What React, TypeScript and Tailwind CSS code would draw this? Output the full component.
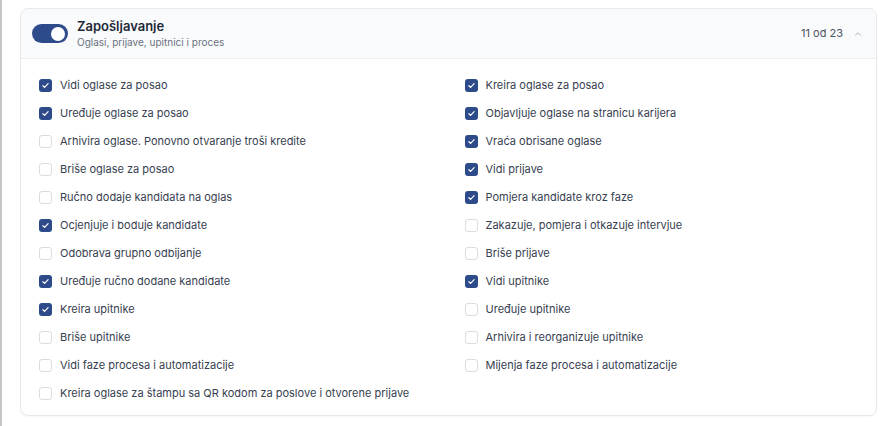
import React from "react";

const items: [string, boolean][] = [
  ["Vidi oglase za posao", true],
  ["Kreira oglase za posao", true],
  ["Uređuje oglase za posao", true],
  ["Objavljuje oglase na stranicu karijera", true],
  ["Arhivira oglase. Ponovno otvaranje troši kredite", false],
  ["Vraća obrisane oglase", true],
  ["Briše oglase za posao", false],
  ["Vidi prijave", true],
  ["Ručno dodaje kandidata na oglas", false],
  ["Pomjera kandidate kroz faze", true],
  ["Ocjenjuje i boduje kandidate", true],
  ["Zakazuje, pomjera i otkazuje intervjue", false],
  ["Odobrava grupno odbijanje", false],
  ["Briše prijave", false],
  ["Uređuje ručno dodane kandidate", true],
  ["Vidi upitnike", true],
  ["Kreira upitnike", true],
  ["Uređuje upitnike", false],
  ["Briše upitnike", false],
  ["Arhivira i reorganizuje upitnike", false],
  ["Vidi faze procesa i automatizacije", false],
  ["Mijenja faze procesa i automatizacije", false],
  ["Kreira oglase za štampu sa QR kodom za poslove i otvorene prijave", false],
];

function Box({ checked }: { checked: boolean }) {
  if (checked) {
    return (
      <span className="flex h-[13px] w-[13px] shrink-0 items-center justify-center rounded-[3px] bg-[#2d4a8a]">
        <svg width="9" height="9" viewBox="0 0 12 12" fill="none">
          <path d="M2.5 6.3l2.3 2.3L9.5 3.6" stroke="white" strokeWidth="1.6" strokeLinecap="round" strokeLinejoin="round" />
        </svg>
      </span>
    );
  }
  return <span className="h-[13px] w-[13px] shrink-0 rounded-[3px] border border-[#d9dce1] bg-white" />;
}

export default function App() {
  return (
    <div className="min-h-[426px] w-[896px] border-l-2 border-[#c6c6c6] bg-white pl-[18px] pr-[19px] pt-[8px]" style={{ fontFamily: "Inter, 'Noto Sans', sans-serif" }}>
      <div className="overflow-hidden rounded-[8px] border border-[#e7e9ed] bg-white shadow-[0_1px_2px_rgba(0,0,0,0.04)]">
        <div className="flex h-[50px] items-center border-b border-[#eceef1] bg-[#f9fafb] pl-[11px] pr-[13px]">
          <div className="relative h-[19px] w-[36px] rounded-full bg-[#2d4a8a]">
            <span className="absolute right-[3px] top-[2.5px] h-[14px] w-[14px] rounded-full bg-white" />
          </div>
          <div className="ml-[9px] flex flex-col">
            <span className="text-[13px] font-semibold leading-[17px] text-[#1f2937]">Zapošljavanje</span>
            <span className="mt-[1px] text-[10px] leading-[13px] text-[#6b7280]">Oglasi, prijave, upitnici i proces</span>
          </div>
          <div className="ml-auto flex items-center gap-[10px]">
            <span className="text-[11px] text-[#4b5563]">11 od 23</span>
            <svg width="10" height="10" viewBox="0 0 24 24" fill="none" stroke="#9ca3af" strokeWidth="2" strokeLinecap="round" strokeLinejoin="round">
              <path d="M6 15l6-6 6 6" />
            </svg>
          </div>
        </div>
        <div className="grid grid-cols-2 gap-x-[32px] px-[18px] pb-[8px] pt-[12px]">
          {items.map(([label, checked]) => (
            <div key={label} className="flex h-[28px] items-center gap-[8px]">
              <Box checked={checked} />
              <span className="text-[11px] text-[#374151]">{label}</span>
            </div>
          ))}
        </div>
      </div>
    </div>
  );
}
